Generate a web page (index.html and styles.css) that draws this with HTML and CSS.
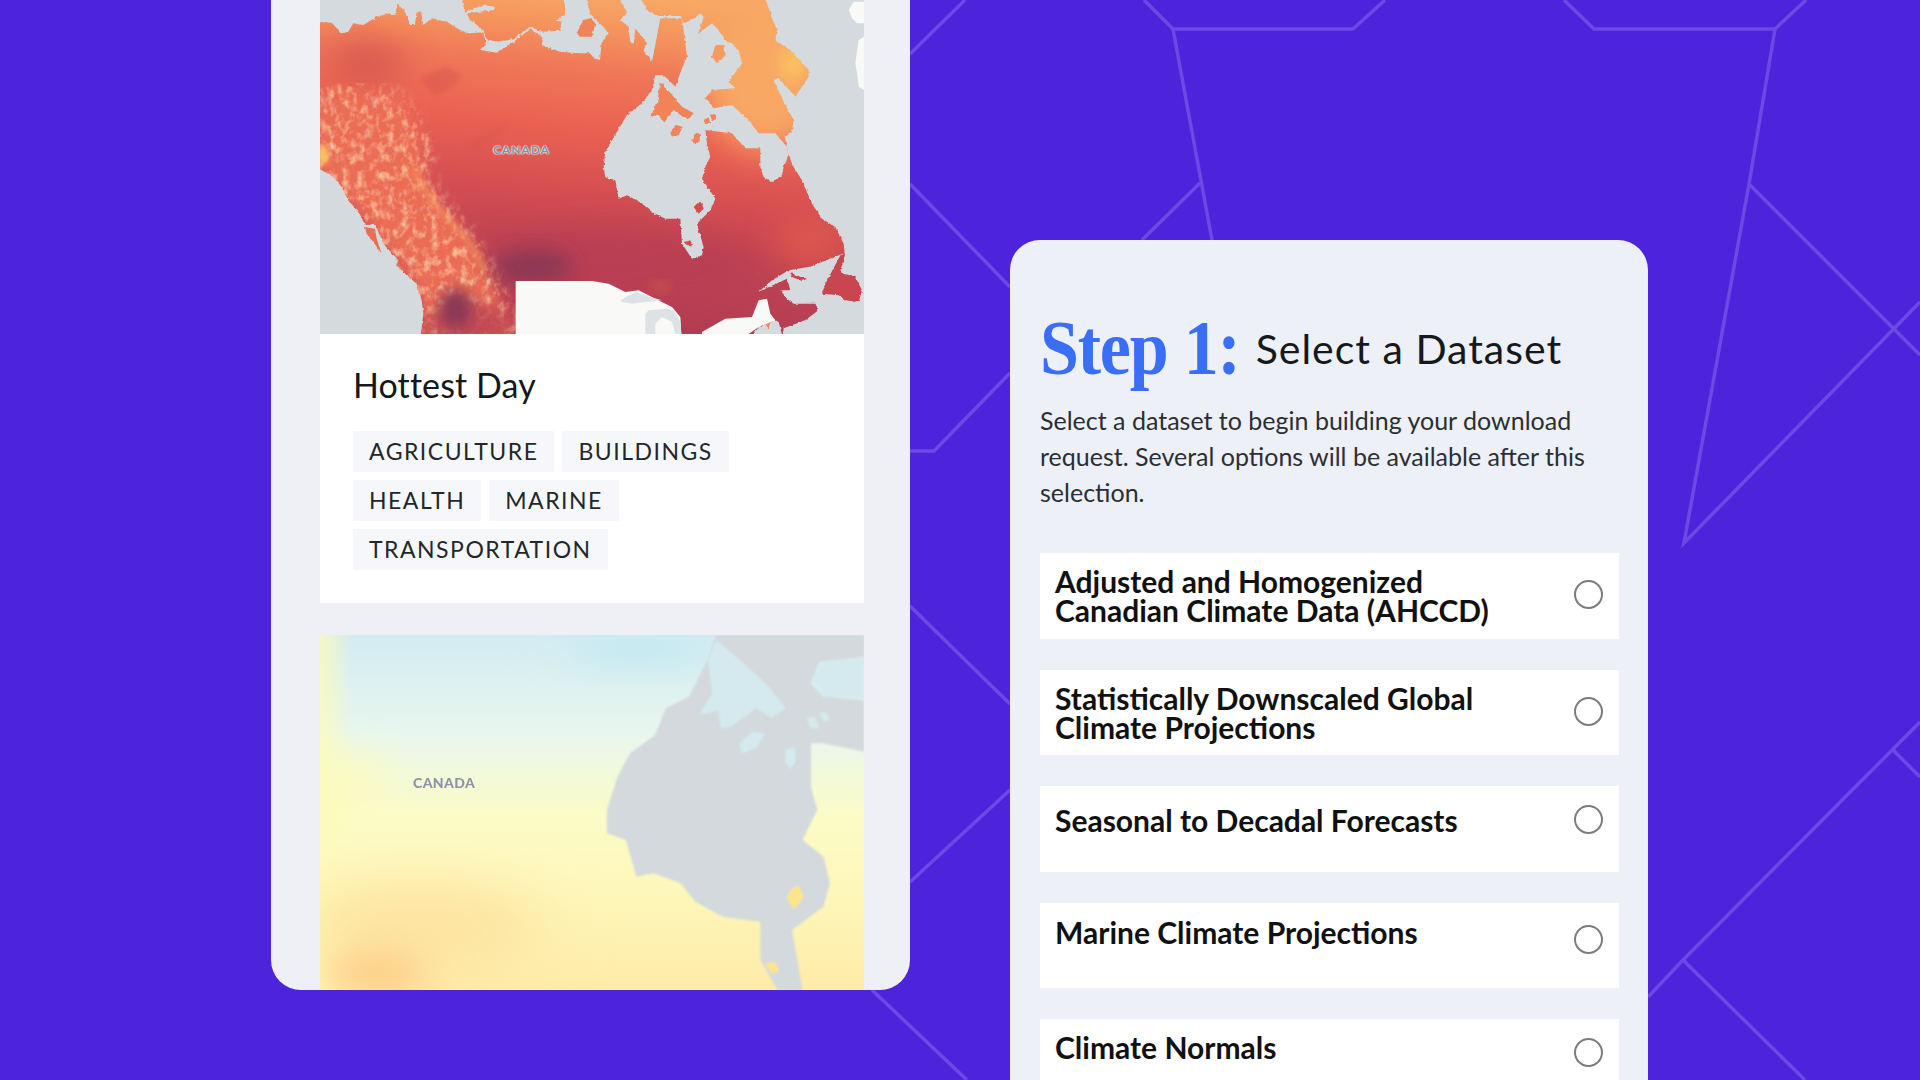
FILE: index.html
```html
<!DOCTYPE html>
<html lang="en">
<head>
  <meta charset="UTF-8">
  <title>Climate Data - Download Steps</title>
  <link rel="stylesheet" href="styles.css">
</head>
<body>
  <div class="stage">
    <!-- Background lines -->
    <svg class="bg-lines" viewBox="0 0 1920 1080" aria-hidden="true">
      <polyline points="965,0 910,54"/>
      <polyline points="1144,0 1173,29 1353,29 1385,0"/>
      <polyline points="1564,0 1594,29 1775,29 1806,0"/>
      <polyline points="1173,29 1212,240"/>
      <polyline points="1200,183 1142,240"/>
      <polyline points="910,184 1010,287"/>
      <polyline points="1010,373 934,451 910,451"/>
      <polyline points="1775,29 1749,184 1684,543 1920,302"/>
      <polyline points="1749,184 1920,355"/>
      <polyline points="910,606 1010,704"/>
      <polyline points="1010,790 910,882"/>
      <polyline points="872,990 967,1080"/>
      <polyline points="1648,997 1683,960 1920,722"/>
      <polyline points="1893,750 1920,777"/>
      <polyline points="1683,960 1805,1080"/>
    </svg>

    <!-- Left card: variable list -->
    <div class="panel panel-list">
      <div class="map map-hot">
        <svg viewBox="0 0 1632 1002" preserveAspectRatio="none" aria-hidden="true">
          <defs>
            <linearGradient id="heatBase" gradientUnits="userSpaceOnUse" x1="1000" y1="0" x2="900" y2="1000">
              <stop offset="0" stop-color="#f8a864"/>
              <stop offset=".12" stop-color="#f4905c"/>
              <stop offset=".22" stop-color="#f07858"/>
              <stop offset=".4" stop-color="#ea6152"/>
              <stop offset=".6" stop-color="#d44e52"/>
              <stop offset=".75" stop-color="#c24452"/>
              <stop offset="1" stop-color="#b03c52"/>
            </linearGradient>
            <filter id="blur8" x="-30%" y="-30%" width="160%" height="160%"><feGaussianBlur stdDeviation="8"/></filter>
            <filter id="blur20" x="-40%" y="-40%" width="180%" height="180%"><feGaussianBlur stdDeviation="20"/></filter>
            <filter id="blur30" x="-50%" y="-50%" width="200%" height="200%"><feGaussianBlur stdDeviation="30"/></filter>
            <filter id="blur50" x="-50%" y="-50%" width="200%" height="200%"><feGaussianBlur stdDeviation="50"/></filter>
            <filter id="blur80" x="-60%" y="-60%" width="220%" height="220%"><feGaussianBlur stdDeviation="80"/></filter>
            <filter id="veins" x="0" y="0" width="100%" height="100%">
              <feGaussianBlur in="SourceAlpha" stdDeviation="16" result="edge"/>
              <feTurbulence type="turbulence" baseFrequency=".03 .024" numOctaves="3" seed="11"/>
              <feColorMatrix values="0 0 0 0 .68  0 0 0 0 .21  0 0 0 0 .29  -4 0 0 0 .62"/>
              <feGaussianBlur stdDeviation="1"/>
              <feComposite in2="edge" operator="in"/>
            </filter>
            <filter id="speck" x="0" y="0" width="100%" height="100%">
              <feGaussianBlur in="SourceAlpha" stdDeviation="16" result="edge"/>
              <feTurbulence type="fractalNoise" baseFrequency=".045 .035" numOctaves="3" seed="4"/>
              <feColorMatrix values="0 0 0 0 .98  0 0 0 0 .62  0 0 0 0 .37  2.2 0 0 0 -1"/>
              <feGaussianBlur stdDeviation="2"/>
              <feComposite in2="edge" operator="in"/>
            </filter>
            <filter id="coast" x="-3%" y="-3%" width="106%" height="106%">
              <feTurbulence type="fractalNoise" baseFrequency=".09" numOctaves="2" seed="3"/>
              <feDisplacementMap in="SourceGraphic" scale="9" xChannelSelector="R" yChannelSelector="G"/>
            </filter>
          </defs>
          <rect class="heat" width="1632" height="1002"/>
          <!-- warm and dark patches -->
          <ellipse class="wine" cx="880" cy="800" rx="440" ry="120" filter="url(#blur50)"/>
          <ellipse class="amber" cx="1340" cy="220" rx="190" ry="230" filter="url(#blur50)"/>
          <ellipse class="sun" cx="1420" cy="190" rx="40" ry="50" filter="url(#blur20)"/>
          <ellipse class="flame" cx="1470" cy="730" rx="110" ry="60" filter="url(#blur50)"/>
          <ellipse class="flame-small" cx="1020" cy="860" rx="26" ry="14" filter="url(#blur20)"/>
          <ellipse class="red" cx="140" cy="190" rx="120" ry="70" filter="url(#blur50)"/>
          <polygon class="warm" points="-20,290 100,270 230,285 300,400 320,560 420,680 510,820 590,1020 310,1020 300,900 230,790 130,660 -20,500" filter="url(#blur20)"/>
          <polygon class="tex" points="-40,270 100,250 240,270 330,400 350,560 450,680 540,820 620,1040 290,1040 280,900 210,790 110,660 -40,500" filter="url(#speck)"/>
          <polygon class="tex" points="-40,270 100,250 240,270 330,400 350,560 450,680 540,820 620,1040 290,1040 280,900 210,790 110,660 -40,500" filter="url(#veins)"/>
          <ellipse class="sun" cx="8" cy="465" rx="18" ry="30" filter="url(#blur8)"/>
          <polyline class="streak" points="280,510 350,620 450,730 495,810" filter="url(#blur8)"/>
          <ellipse class="wine" cx="450" cy="970" rx="130" ry="60" filter="url(#blur20)"/>
          <ellipse class="dark" cx="640" cy="800" rx="120" ry="50" filter="url(#blur30)"/>
          <ellipse class="dark" cx="408" cy="925" rx="50" ry="60" filter="url(#blur20)"/>
          <polygon class="lake" points="295,235 380,200 425,225 400,262 345,285" filter="url(#blur8)"/>
          <polygon class="lake" points="440,440 480,410 555,375 560,385 490,430 465,455" filter="url(#blur8)"/>
          <!-- water -->
          <g filter="url(#coast)">
            <polygon class="water" points="-20,-20 420,-20 435,35 490,15 525,20 522,30 440,40 450,60 490,90 500,118 530,125 580,118 630,80 665,95 720,92 725,65 708,62 735,45 735,15 725,-20 795,-20 812,45 830,62 850,80 866,100 845,125 840,180 820,175 812,160 775,160 720,155 665,135 670,115 630,85 620,95 575,130 530,158 480,150 497,130 490,97 445,100 420,90 380,65 335,55 310,75 303,35 290,35 285,75 270,75 255,35 232,10 225,45 205,40 170,50 130,75 100,70 85,95 65,100 35,68 -20,65"/>
            <polygon class="water" points="891,-20 951,-20 986,35 1016,48 1081,48 1091,70 1116,60 1141,40 1151,50 1136,100 1176,70 1201,100 1221,125 1236,130 1256,150 1266,190 1226,245 1246,265 1176,270 1156,295 1181,325 1236,315 1286,360 1316,400 1366,400 1401,440 1406,465 1391,501 1386,526 1356,546 1331,531 1321,501 1321,445 1276,445 1236,400 1156,390 1161,430 1171,470 1156,501 1146,536 1186,596 1171,631 1131,671 1151,741 1146,766 1116,776 1086,731 1081,656 1036,656 996,636 961,606 921,586 896,596 886,541 856,531 851,501 856,455 891,395 921,345 966,310 996,270 1006,225 1026,225 1041,235 1066,260 1086,205 1101,170 1086,55 1021,55 1006,135 996,185 971,150 981,130 946,85 941,130 931,130 926,80 901,60 921,40"/>
            <polygon class="water" points="1331,-20 1652,-20 1652,1022 1386,1022 1391,985 1456,961 1496,930 1486,911 1421,911 1401,896 1381,871 1411,871 1401,836 1326,871 1316,875 1356,841 1406,811 1466,801 1506,786 1574,759 1571,731 1546,681 1506,656 1476,611 1446,541 1421,501 1406,465 1401,440 1395,410 1416,395 1421,360 1391,305 1361,240 1376,235 1426,290 1466,230 1466,210 1416,155 1366,120 1371,90 1351,40"/>
            <polygon class="water" points="-20,496 40,531 65,561 85,601 110,631 125,651 135,676 165,671 175,696 190,731 235,781 228,796 250,816 290,851 305,901 310,941 300,1022 -20,1022"/>
            <polygon class="water" points="1286,1022 1316,981 1366,961 1376,966 1391,1022"/>
            <polygon class="water" points="826,70 846,78 850,125 826,125"/>
          </g>
          <!-- land that lies over the water -->
          <g filter="url(#coast)">
            <polygon class="land-orange" points="770,100 790,60 812,55 826,70 816,110 780,110"/>
            <polygon class="land-red" points="135,681 165,686 170,716 185,761 160,726 140,701"/>
            <polygon class="land-orange" points="1026,250 1086,320 1121,340 1106,358 1081,345 1061,330 1031,370 1016,345 991,350 1011,310 1021,250"/>
            <polygon class="land-orange" points="1051,400 1066,375 1088,380 1076,405 1056,410"/>
            <polygon class="land-orange" points="1116,420 1131,395 1141,405 1134,428 1121,430"/>
            <polygon class="land-orange" points="1151,360 1166,352 1171,370 1156,372"/>
            <polygon class="land-orange" points="1171,345 1184,342 1188,358 1176,362"/>
            <polygon class="land-amber" points="1176,170 1186,135 1211,135 1214,170 1191,190"/>
            <polygon class="land-dark" points="1121,621 1141,601 1151,626 1136,641"/>
            <polygon class="land-dark" points="1091,726 1111,721 1116,736 1101,736"/>
            <polygon class="land-orange" points="1336,971 1351,966 1346,986"/>
            <polygon class="land-deep" points="1561,766 1576,761 1561,811 1571,821 1606,831 1626,871 1616,906 1576,901 1556,886 1506,881 1516,851"/>
            <polygon class="land-deep" points="1411,819 1461,836 1446,843 1416,831"/>
          </g>
          <!-- United States -->
          <polygon class="usa" points="587,843 816,843 866,851 916,876 956,871 1006,896 1056,921 1081,951 1084,1002 587,1002"/>
          <polygon class="usa" points="1146,996 1216,956 1296,951 1316,901 1341,896 1351,941 1366,961 1316,981 1286,1002 1146,1002"/>
          <polygon class="lake-gray" points="901,901 946,876 991,891 1026,901 976,906 936,911 906,906"/>
          <polygon class="lake-gray" points="976,941 986,931 1041,926 1061,931 1081,966 1084,1002 1066,1002 1056,966 1026,951 1006,971 1006,1002 976,1002"/>
          <!-- Greenland -->
          <polygon class="usa" points="1586,30 1601,5 1632,5 1632,70 1611,70 1596,55"/>
          <polygon class="usa" points="1606,190 1616,120 1632,110 1632,270 1616,260 1611,220"/>
        </svg>
        <span class="map-label map-label-hot">CANADA</span>
      </div>
      <div class="variable-card">
        <h2>Hottest Day</h2>
        <div class="tags">
          <span class="tag">AGRICULTURE</span>
          <span class="tag">BUILDINGS</span>
          <span class="tag">HEALTH</span>
          <span class="tag">MARINE</span>
          <span class="tag">TRANSPORTATION</span>
        </div>
      </div>
      <div class="map map-cold">
        <svg viewBox="143 45 1293 1065" preserveAspectRatio="none" aria-hidden="true">
          <defs>
            <linearGradient id="coldBase" x1="0" y1="0" x2="0" y2="1">
              <stop offset="0" stop-color="#d2ecf2"/>
              <stop offset=".28" stop-color="#e8f6ee"/>
              <stop offset=".5" stop-color="#fbfcc8"/>
              <stop offset=".75" stop-color="#fef6b8"/>
              <stop offset="1" stop-color="#feeba8"/>
            </linearGradient>
            <linearGradient id="coldEdge" x1="0" y1="0" x2="1" y2="0">
              <stop offset="0" stop-color="#fdfbb8" stop-opacity=".8"/>
              <stop offset=".06" stop-color="#fdfbb8" stop-opacity="0"/>
            </linearGradient>
            <filter id="soft" x="-5%" y="-5%" width="110%" height="110%"><feGaussianBlur stdDeviation="3"/></filter>
          </defs>
          <rect x="143" y="45" width="1293" height="1065" fill="url(#coldBase)"/>
          <rect x="143" y="45" width="1293" height="1065" fill="url(#coldEdge)"/>
          <ellipse class="ice" cx="900" cy="90" rx="170" ry="50" filter="url(#blur50)"/>
          <ellipse class="lemon" cx="220" cy="470" rx="70" ry="90" filter="url(#blur50)"/>
          <ellipse class="peach-soft" cx="380" cy="920" rx="290" ry="130" filter="url(#blur80)"/>
          <ellipse class="peach" cx="280" cy="1060" rx="120" ry="70" filter="url(#blur50)"/>
          <g filter="url(#soft)">
            <polygon class="gray" points="1085,45 1060,130 1020,230 965,265 940,345 880,400 850,470 825,570 825,640 870,660 895,770 935,760 1000,790 1035,845 1100,890 1190,905 1190,1020 1230,1110 1290,1110 1265,930 1340,860 1355,790 1340,710 1290,660 1325,570 1310,500 1310,370 1340,370 1436,395 1436,240 1340,230 1310,190 1330,125 1436,110 1436,45"/>
            <polygon class="ice-land" points="1085,60 1150,130 1210,200 1250,265 1215,295 1180,265 1120,320 1095,325 1090,270 1045,285 1075,220 1065,120"/>
            <polygon class="ice-land" points="1140,370 1170,335 1200,340 1180,385 1145,400"/>
            <polygon class="ice-land" points="1250,390 1272,380 1275,425 1260,448 1248,425"/>
            <polygon class="ice-land" points="1300,295 1320,290 1330,325 1310,325"/>
            <polygon class="ice-land" points="1330,280 1345,275 1355,300 1340,305"/>
            <polygon class="ice-land" points="1310,180 1340,125 1436,110 1436,235 1345,230"/>
            <polygon class="lemon-land" points="1260,810 1280,795 1293,830 1270,870 1252,835"/>
            <polygon class="lemon-land" points="1200,1030 1225,1025 1235,1055 1215,1060"/>
          </g>
        </svg>
        <span class="map-label map-label-cold">CANADA</span>
      </div>
    </div>

    <!-- Right card: dataset step -->
    <div class="panel panel-step">
      <h1 class="step-title"><span class="step-num">Step 1:</span> <span class="step-name">Select a Dataset</span></h1>
      <p class="step-intro">Select a dataset to begin building your download request. Several options will be available after this selection.</p>
      <div class="dataset-list">
        <div class="dataset">
          <div class="dataset-name">Adjusted and Homogenized<br>Canadian Climate Data (AHCCD)</div>
          <span class="radio"></span>
        </div>
        <div class="dataset">
          <div class="dataset-name">Statistically Downscaled Global<br>Climate Projections</div>
          <span class="radio"></span>
        </div>
        <div class="dataset dataset-low">
          <div class="dataset-name">Seasonal to Decadal Forecasts</div>
          <span class="radio"></span>
        </div>
        <div class="dataset dataset-mid">
          <div class="dataset-name">Marine Climate Projections</div>
          <span class="radio"></span>
        </div>
        <div class="dataset dataset-top">
          <div class="dataset-name">Climate Normals</div>
          <span class="radio"></span>
        </div>
      </div>
    </div>
  </div>
</body>
</html>
```

FILE: styles.css
```css
/* General */
* {
  box-sizing: border-box;
}

body {
  margin: 0;
  background-color: #4d24dc;
  font-family: Lato, "Noto Sans", Arial, sans-serif;
  color: #15191c;
}

.stage {
  position: relative;
  display: flex;
  align-items: flex-start;
  width: 1920px;
  height: 1080px;
  padding-left: 271px;
  overflow: hidden;
}

.bg-lines {
  position: absolute;
  top: 0;
  left: 0;
  width: 1920px;
  height: 1080px;
}

.bg-lines polyline {
  fill: none;
  stroke: #6c49e4;
  stroke-width: 3.5;
}

.panel {
  position: relative;
}

/* Left card */
.panel-list {
  width: 639px;
  height: 990px;
  padding: 0 46px 0 49px;
  background-color: #eff0f6;
  border-radius: 0 0 30px 30px;
  overflow: hidden;
}

.map {
  position: relative;
  width: 544px;
}

.map svg {
  display: block;
  width: 100%;
  height: 100%;
}

.map-hot {
  height: 334px;
}

.map-cold {
  height: 355px;
  margin-top: 32px;
}

.map-label {
  position: absolute;
  font-weight: 900;
}

.map-label-hot {
  top: 142px;
  left: 173px;
  font-size: 12px;
  letter-spacing: 0.9px;
  color: #7d93a0;
  text-shadow: 0 0 2px #fff, 0 0 1px #fff, 0 0 1px #fff;
}

.map-label-cold {
  top: 139px;
  left: 93px;
  font-size: 14px;
  letter-spacing: 0.4px;
  color: #8d92ab;
  filter: blur(0.5px);
}

.heat { fill: url(#heatBase); }
.wine { fill: #b83e53; opacity: 0.75; }
.amber { fill: #f8a864; }
.flame { fill: #e8624e; opacity: 0.7; }
.flame-small { fill: #e2624f; opacity: 0.8; }
.warm { fill: #ec6c52; }
.sun { fill: #fbc062; }
.red { fill: #d0504f; opacity: 0.7; }
.dark { fill: #8b3855; }
.tex { fill: #fff; }
.lake { fill: #d8564f; opacity: 0.5; }
.streak { fill: none; stroke: #f99a5e; stroke-width: 22; opacity: 0.55; }
.water { fill: #d4dadd; }
.land-orange { fill: #f28358; }
.land-amber { fill: #f59a60; }
.land-red { fill: #ee6c52; }
.land-dark { fill: #d94c4c; }
.land-deep { fill: #c9444f; }
.usa { fill: #f9f9f7; }
.lake-gray { fill: #dde2e5; }
.ice { fill: #c4e8f1; }
.lemon { fill: #fdfbb4; opacity: 0.7; }
.peach { fill: #fdcf88; }
.peach-soft { fill: #fde3a0; }
.gray { fill: #d3d9dc; }
.ice-land { fill: #d4eaee; }
.lemon-land { fill: #fbe58c; }

.variable-card {
  width: 544px;
  height: 269px;
  padding: 30px 32px 0 33px;
  background-color: #fff;
}

.variable-card h2 {
  margin: 0 0 25px;
  font-size: 34px;
  font-weight: 400;
  line-height: 42px;
  letter-spacing: 0.1px;
}

.tags {
  display: flex;
  flex-wrap: wrap;
  gap: 8px;
}

.tag {
  padding: 7px 16px;
  background-color: #f6f7fa;
  font-size: 23px;
  line-height: 27px;
  letter-spacing: 1.5px;
  color: #23272a;
}

/* Right card */
.panel-step {
  width: 638px;
  height: 900px;
  margin: 240px 0 0 100px;
  padding: 62px 29px 0 30px;
  background-color: #edf0f7;
  border-radius: 30px 30px 0 0;
}

.step-title {
  display: flex;
  align-items: flex-start;
  gap: 16px;
  margin: 0;
  height: 92px;
  font-weight: 400;
}

.step-num {
  font-family: "Liberation Serif", serif;
  font-size: 70px;
  font-weight: 700;
  letter-spacing: -1.2px;
  line-height: 92px;
  color: #3a6ef6;
  transform: scaleY(1.12);
}

.step-name {
  margin-top: 19px;
  font-size: 41px;
  line-height: 56px;
  letter-spacing: 1px;
  color: #15191c;
}

.step-intro {
  margin: 8px 0 0;
  font-size: 25px;
  line-height: 36px;
  color: #2b2f33;
}

.dataset-list {
  display: flex;
  flex-direction: column;
  gap: 31px;
  margin-top: 43px;
}

.dataset {
  display: flex;
  align-items: flex-start;
  justify-content: space-between;
  height: 85.6px;
  padding: 14px 16px 0 15px;
  background-color: #fff;
}

.dataset-name {
  font-size: 30px;
  font-weight: 700;
  line-height: 29px;
  color: #111;
}

.radio {
  flex: none;
  width: 29px;
  height: 29px;
  margin-top: 13px;
  border: 2px solid #7c7c7c;
  border-radius: 50%;
}

.dataset-low .dataset-name { margin-top: 6px; }
.dataset-low .radio { margin-top: 5px; }
.dataset-mid .dataset-name { margin-top: 1px; }
.dataset-mid .radio { margin-top: 8px; }
.dataset-top .radio { margin-top: 5px; }
```
